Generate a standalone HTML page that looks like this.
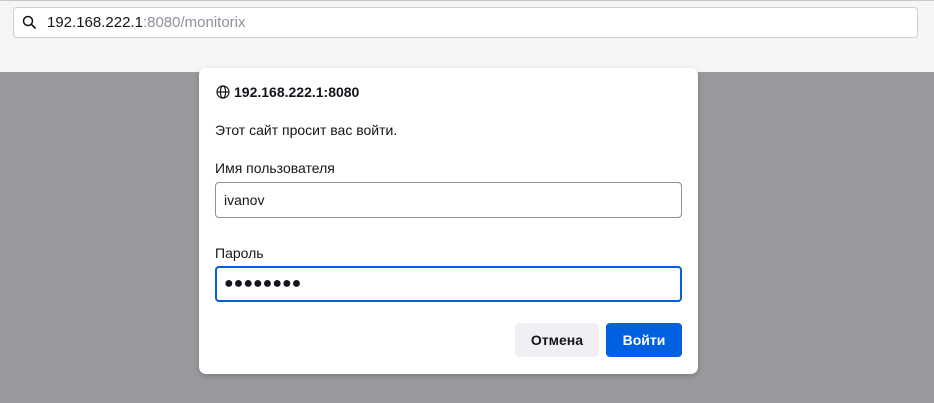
<!DOCTYPE html>
<html><head><meta charset="utf-8"><style>
*{box-sizing:border-box;margin:0;padding:0}
body{width:934px;height:403px;overflow:hidden;background:#9a999d;font-family:"Liberation Sans","Noto Sans CJK SC",sans-serif;position:relative}
.top{position:absolute;left:0;top:0;width:934px;height:72px;background:#f6f5f4;border-top:1px solid #c8c8cc}
.url{position:absolute;left:13px;top:6px;width:905px;height:31px;background:#fff;border:1px solid #cfcfd8;border-radius:4px;font-size:15px;line-height:29px;padding-left:33px;color:#15141a}
.url span{color:#8f8f9d}
.dlg{position:absolute;left:199px;top:68px;width:499px;height:306px;background:#fff;border-radius:7px;box-shadow:0 2px 6px rgba(0,0,0,.2)}
.t{position:absolute;font-size:14px;color:#15141a}
.inp{position:absolute;left:16px;width:467px;height:36px;border:1px solid #8f8f9d;border-radius:4px;font-size:14px;line-height:34px;padding-left:8px;color:#15141a}
.btn{position:absolute;top:255px;height:34px;border-radius:4px;font-size:14px;font-weight:bold;text-align:center;line-height:34px}
</style></head><body>
<div class="top"><div class="url">
<svg style="position:absolute;left:8px;top:7px" width="15" height="15" viewBox="0 0 15 15"><circle cx="6" cy="6" r="4.5" fill="none" stroke="#15141a" stroke-width="1.5"/><path d="M9.5 9.5L13.5 13.5" stroke="#15141a" stroke-width="1.6"/></svg>
192.168.222.1<span>:8080/monitorix</span></div></div>
<div class="dlg">
<svg style="position:absolute;left:17px;top:17px" width="14" height="14" viewBox="0 0 14 14" fill="none" stroke="#15141a" stroke-width="1.2"><circle cx="7" cy="7" r="6"/><ellipse cx="7" cy="7" rx="2.6" ry="6"/><path d="M1 7h12"/></svg>
<div class="t" style="left:35px;top:16px;font-weight:bold">192.168.222.1:8080</div>
<div class="t" style="left:16px;top:54px">Этот сайт просит вас войти.</div>
<div class="t" style="left:16px;top:92px">Имя пользователя</div>
<div class="inp" style="top:114px">ivanov</div>
<div class="t" style="left:16px;top:177px">Пароль</div>
<div class="inp" style="top:198px;border:2px solid #0061e0;line-height:32px;padding-left:7px;font-size:16px">●●●●●●●●</div>
<div class="btn" style="left:316px;width:84px;background:#f0f0f4;color:#15141a">Отмена</div>
<div class="btn" style="left:407px;width:76px;background:#0061e0;color:#fff">Войти</div>
</div>
</body></html>
